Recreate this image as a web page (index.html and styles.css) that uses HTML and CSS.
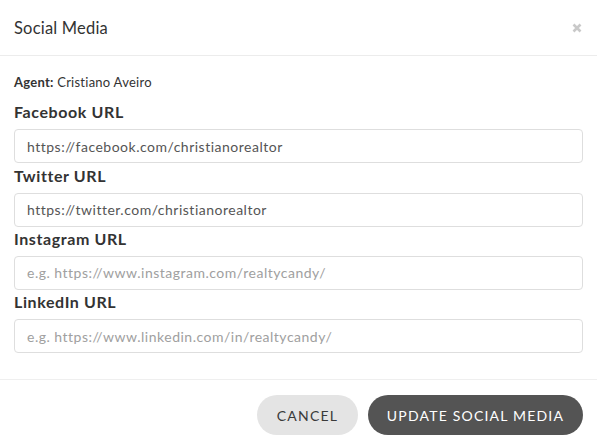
FILE: index.html
```html
<!DOCTYPE html>
<html lang="en">
<head>
<meta charset="utf-8">
<title>Social Media</title>
<link rel="stylesheet" href="styles.css">
</head>
<body>
<div class="modal">
  <div class="modal-header">
    <h4 class="modal-title">Social Media</h4>
    <button class="close" type="button" aria-label="Close">
      <svg width="10" height="10" viewBox="0 0 10 10"><path d="M1.5 1.5 L8.5 8.5 M8.5 1.5 L1.5 8.5" stroke="#c9c9c9" stroke-width="2.6" stroke-linecap="butt"/></svg>
    </button>
  </div>
  <div class="modal-body">
    <p class="agent"><strong>Agent:</strong> Cristiano Aveiro</p>
    <div class="field">
      <label class="field-label">Facebook URL</label>
      <input class="field-input" type="text" value="https://facebook.com/christianorealtor">
    </div>
    <div class="field">
      <label class="field-label">Twitter URL</label>
      <input class="field-input" type="text" value="https://twitter.com/christianorealtor">
    </div>
    <div class="field">
      <label class="field-label">Instagram URL</label>
      <input class="field-input" type="text" placeholder="e.g. https://www.instagram.com/realtycandy/">
    </div>
    <div class="field">
      <label class="field-label">LinkedIn URL</label>
      <input class="field-input" type="text" placeholder="e.g. https://www.linkedin.com/in/realtycandy/">
    </div>
  </div>
  <div class="modal-footer">
    <button class="btn btn-cancel" type="button">Cancel</button>
    <button class="btn btn-primary" type="button">Update Social Media</button>
  </div>
</div>
</body>
</html>
```
FILE: styles.css
```css
* { box-sizing: border-box; }
html, body {
  margin: 0;
  padding: 0;
  background: #fff;
}
body {
  font-family: Lato, "Noto Sans", sans-serif;
  color: #333;
}
.modal {
  width: 597px;
}
.modal-header {
  height: 56px;
  padding: 0 14px;
  border-bottom: 1px solid #ececec;
  display: flex;
  align-items: center;
  justify-content: space-between;
}
.modal-title {
  margin: 0;
  font-size: 16.5px;
  font-weight: 400;
  letter-spacing: 0.2px;
  color: #333;
  line-height: 20px;
  padding-top: 1px;
}
.close {
  border: 0;
  background: none;
  padding: 0;
  margin-right: 1px;
  display: flex;
  cursor: pointer;
}
.modal-body {
  padding: 17px 14px 26px;
}
.agent {
  margin: 0 0 9px;
  font-size: 13px;
  line-height: 18px;
  letter-spacing: 0.25px;
  color: #333;
}
.agent strong { font-weight: 700; }
.field {
  display: flex;
  flex-direction: column;
}
.field-label {
  margin: 2.3px 0 7px;
  font-size: 16px;
  font-weight: 700;
  line-height: 20px;
  letter-spacing: 0.6px;
  color: #333;
}
.field-input {
  height: 34px;
  width: 100%;
  border: 1px solid #dedede;
  border-radius: 4px;
  padding: 0 12px;
  font-family: Lato, "Noto Sans", sans-serif;
  font-size: 14px;
  letter-spacing: 0.5px;
  color: #555;
  background: #fff;
}
.field-input::placeholder {
  color: #a0a0a0;
}
.modal-footer {
  border-top: 1px solid #efefef;
  padding: 15px 14px 13px;
  display: flex;
  justify-content: flex-end;
  gap: 10px;
}
.btn {
  height: 40px;
  border: 0;
  border-radius: 20px;
  font-family: Lato, "Noto Sans", sans-serif;
  font-size: 14px;
  letter-spacing: 1.2px;
  text-transform: uppercase;
  cursor: pointer;
}
.btn-cancel {
  width: 101px;
  background: #e4e4e4;
  color: #3a3a3a;
}
.btn-primary {
  width: 215px;
  background: #545454;
  color: #fff;
}
```
